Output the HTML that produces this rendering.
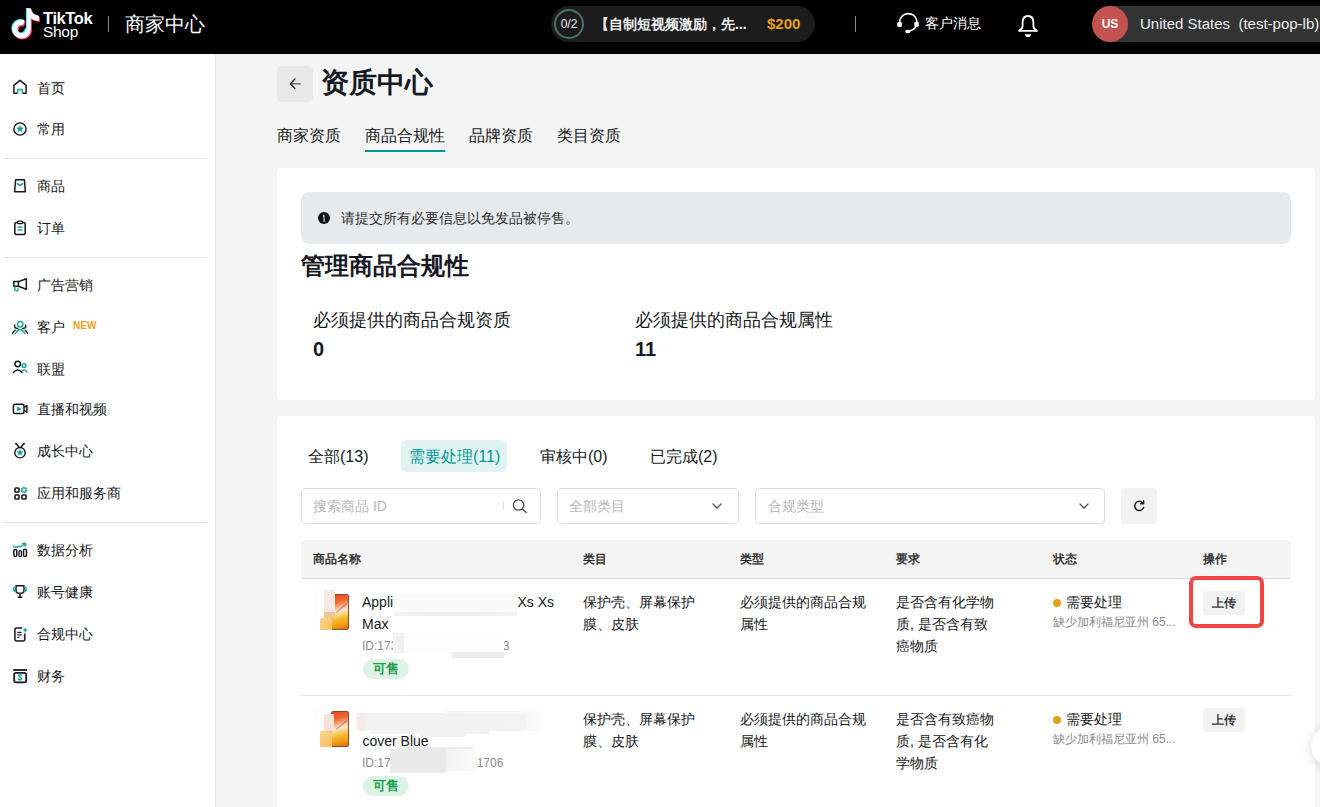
<!DOCTYPE html>
<html><head><meta charset="utf-8">
<style>
*{box-sizing:border-box;margin:0;padding:0}
html,body{width:1320px;height:807px;overflow:hidden;background:#f4f4f4;font-family:"Liberation Sans",sans-serif;color:#161823}
.a{position:absolute;white-space:nowrap}
svg{display:block}
.nav{position:absolute;left:36.5px;font-size:14px;line-height:20px;color:#161823}
.ic{position:absolute;left:12px;width:16px;height:16px}
.dv{position:absolute;left:4px;width:203px;height:1px;background:#e3e3e3}
.th{top:549.5px;font-size:12px;line-height:18px;color:#2a2a2a;-webkit-text-stroke:0.4px currentColor}
.td{font-size:14px;line-height:22px;color:#161823;white-space:nowrap}
.id{font-size:12px;line-height:18px;color:#8a8a8a}
.badge{width:46px;height:20px;border-radius:10px;background:#dcf2e4;color:#1f9e4e;font-size:13px;font-weight:700;line-height:20px;text-align:center}
.sub{font-size:12px;line-height:18px;color:#8a8a8a}
.btn{width:42px;height:24px;border-radius:4px;background:#f1f1f1;font-size:12px;-webkit-text-stroke:0.3px currentColor;line-height:24px;text-align:center;color:#161823}
</style></head><body>
<!-- HEADER -->
<div class="a" style="left:0;top:0;width:1320px;height:54px;background:#000"></div>
<svg class="a" style="left:11px;top:8px" width="34" height="38" viewBox="0 0 34 38">

<g fill="#25f4ee" transform="translate(-0.9,-0.9)"><path d="M15.8 0.5H19.9C20.3 4.3 23.5 7.6 28 8V12.8C25 12.8 22.2 11.9 19.9 10.4V21.3H15.8Z"/><path d="M13.78 12.46A9.3 9.3 0 1 0 19.90 21.2H14.70A4.1 4.1 0 1 1 12.00 17.35Z"/></g>
<g fill="#fe2c55" transform="translate(1.1,1.1)"><path d="M15.8 0.5H19.9C20.3 4.3 23.5 7.6 28 8V12.8C25 12.8 22.2 11.9 19.9 10.4V21.3H15.8Z"/><path d="M13.78 12.46A9.3 9.3 0 1 0 19.90 21.2H14.70A4.1 4.1 0 1 1 12.00 17.35Z"/></g>
<g fill="#fff"><path d="M15.8 0.5H19.9C20.3 4.3 23.5 7.6 28 8V12.8C25 12.8 22.2 11.9 19.9 10.4V21.3H15.8Z"/><path d="M13.78 12.46A9.3 9.3 0 1 0 19.90 21.2H14.70A4.1 4.1 0 1 1 12.00 17.35Z"/></g>
</svg>
<div class="a" style="left:43px;top:9px;font-size:16.5px;line-height:18px;font-weight:700;color:#fff;letter-spacing:-0.4px">TikTok</div>
<div class="a" style="left:43px;top:22px;font-size:15.5px;line-height:20px;color:#fff;letter-spacing:-0.3px">Shop</div>
<div class="a med" style="left:125px;top:10px;font-size:20px;color:#fff;line-height:28px;font-weight:500">商家中心</div>
<div class="a" style="left:108px;top:16px;width:1px;height:16px;background:#8a8a8a"></div>
<div class="a" style="left:551px;top:6px;width:264px;height:36px;background:#1c1c1c;border-radius:18px"></div>
<div class="a" style="left:554px;top:9px;width:30px;height:30px;border:2px solid #4a716a;border-radius:50%"></div>
<div class="a" style="left:554px;top:9px;width:30px;line-height:30px;text-align:center;font-size:12px;color:#eee">0/2</div>
<div class="a" style="left:595px;top:14px;font-size:14px;line-height:20px;font-weight:700;color:#eee">【自制短视频激励，先...</div>
<div class="a" style="left:767px;top:14px;font-size:15px;line-height:20px;font-weight:700;color:#e6a11a">$200</div>
<div class="a" style="left:855px;top:16px;width:1px;height:16px;background:#8a8a8a"></div>
<svg class="a" style="left:892px;top:8px" width="32" height="30" viewBox="0 0 32 30" fill="none" stroke="#fff" stroke-width="1.6" stroke-linecap="round"><path d="M7.6 14.5A8.7 8.7 0 1 1 18.2 22.8"/><rect x="5.2" y="13.8" width="4.7" height="5.2" rx="1.6" fill="#fff" stroke="none"/><rect x="22.3" y="13.8" width="4.6" height="5" rx="1.6" fill="#fff" stroke="none"/><rect x="13.2" y="21.7" width="5.2" height="3.6" rx="1.8" fill="#fff" stroke="none"/></svg>
<div class="a med" style="left:925px;top:13px;font-size:14px;line-height:20px;color:#fff">客户消息</div>
<svg class="a" style="left:1014px;top:12px" width="28" height="28" viewBox="0 0 28 28" fill="none" stroke="#fff" stroke-width="1.8" stroke-linejoin="round"><path d="M14 4C10.3 4 8.6 6.8 8.6 10.5V14C8.6 16.3 7.2 17.8 5 18.9H23C20.8 17.8 19.4 16.3 19.4 14V10.5C19.4 6.8 17.7 4 14 4Z"/><path d="M11 22.2H17Q16.8 25 14 25Q11.2 25 11 22.2Z" fill="#fff" stroke="none"/></svg>
<div class="a" style="left:1110px;top:6px;width:220px;height:36px;background:#333"></div>
<div class="a" style="left:1092px;top:6px;width:36px;height:36px;border-radius:50%;background:#c35250;color:#fff;font-size:12px;font-weight:700;line-height:36px;text-align:center">US</div>
<div class="a med" style="left:1140px;top:14px;font-size:15px;line-height:20px;color:#eee">United States&nbsp;&nbsp;(test-pop-lb)</div>

<!-- SIDEBAR -->
<div class="a" style="left:0;top:54px;width:215px;height:753px;background:#fff"></div>
<div class="a" style="left:215px;top:54px;width:1px;height:753px;background:#e5e5e5"></div>
<div class="dv" style="top:158px"></div>
<div class="dv" style="top:257px"></div>
<div class="dv" style="top:522px"></div>
<div class="nav" style="top:77.5px">首页</div>
<div class="nav" style="top:118.5px">常用</div>
<div class="nav" style="top:175.5px">商品</div>
<div class="nav" style="top:217.5px">订单</div>
<div class="nav" style="top:274.5px">广告营销</div>
<div class="nav" style="top:316.5px">客户</div>
<div class="nav" style="top:358.5px">联盟</div>
<div class="nav" style="top:398.5px">直播和视频</div>
<div class="nav" style="top:440.5px">成长中心</div>
<div class="nav" style="top:482.5px">应用和服务商</div>
<div class="nav" style="top:539.5px">数据分析</div>
<div class="nav" style="top:581.5px">账号健康</div>
<div class="nav" style="top:623.5px">合规中心</div>
<div class="nav" style="top:665.5px">财务</div>

<!-- ICONS -->
<svg class="ic" style="top:79px" viewBox="0 0 16 16" fill="none" stroke-width="1.5" stroke-linejoin="round"><path d="M5.6 14.2H1.9V6.3L8 1.3L14.1 6.3V14.2H10.4" stroke="#161823"/><path d="M5.6 14.5V10.4H10.4V14.5" stroke="#1aa39c"/></svg>
<svg class="ic" style="top:121px" viewBox="0 0 16 16" fill="none"><circle cx="8" cy="8" r="6.1" stroke="#161823" stroke-width="1.4"/><path d="M8.00 4.60 L8.94 6.71 L11.23 6.95 L9.52 8.49 L10.00 10.75 L8.00 9.60 L6.00 10.75 L6.48 8.49 L4.77 6.95 L7.06 6.71Z" fill="#1aa39c" stroke="#1aa39c" stroke-width="0.6" stroke-linejoin="round"/></svg>
<svg class="ic" style="top:178px" viewBox="0 0 16 16" fill="none" stroke-width="1.5" stroke-linejoin="round"><path d="M3.6 1.8H12.4L13.4 13.8H2.6Z" stroke="#161823"/><path d="M5.4 5.6Q8 8.6 10.6 5.6" stroke="#1aa39c" stroke-width="1.7" stroke-linecap="round"/></svg>
<svg class="ic" style="top:220px" viewBox="0 0 16 16" fill="none" stroke-width="1.5"><rect x="2.8" y="2.6" width="10.4" height="12" rx="1.8" stroke="#161823"/><rect x="5.6" y="1.2" width="4.8" height="2.4" rx="1.2" fill="#fff" stroke="#161823" stroke-width="1.3"/><path d="M5.6 7.3H10.4M5.6 10H10.4" stroke="#1aa39c" stroke-width="1.5"/></svg>
<svg class="ic" style="top:277px" viewBox="0 0 16 16" fill="none" stroke-width="1.5" stroke-linejoin="round"><rect x="1.8" y="4.6" width="4.6" height="4.6" stroke="#161823"/><path d="M6.4 4.6L14.3 1.8V12.2L6.4 9.2" stroke="#161823"/><path d="M2.9 9.6V12.3Q2.9 13.9 4.5 13.9Q6 13.9 6 12.4V11.2" stroke="#1aa39c"/></svg>
<svg class="ic" style="top:319px" viewBox="0 0 16 16" fill="none" stroke-width="1.35" stroke-linecap="round"><circle cx="8.2" cy="5.2" r="2.75" stroke="#1aa39c"/><path d="M3.4 14.5Q8.1 6.6 12.9 14.5" stroke="#1aa39c" stroke-width="1.45"/><path d="M2.9 6.2Q1.4 9.2 5.8 9.5M13.5 6.2Q15 9.2 10.6 9.5M0.6 14.5Q1.4 12.2 3.1 11.2M15.6 14.5Q14.8 12.2 13.2 11.2" stroke="#161823"/></svg>
<svg class="ic" style="top:359px" viewBox="0 0 16 16" fill="none" stroke-width="1.5" stroke-linecap="round"><circle cx="5.7" cy="5" r="2.7" stroke="#161823"/><path d="M1.3 13.6Q5.7 8.2 10 13.6" stroke="#161823"/><circle cx="12" cy="6.6" r="1.9" stroke="#1aa39c"/><path d="M10.6 11.6Q13.2 9.8 14.9 13.2" stroke="#1aa39c"/></svg>
<svg class="ic" style="top:401px" viewBox="0 0 16 16" fill="none" stroke-width="1.5" stroke-linejoin="round"><rect x="1.4" y="3.3" width="10.6" height="9.2" rx="1.6" stroke="#161823"/><path d="M12 6.4L14.9 4.6V11.2L12 9.4" stroke="#161823"/><path d="M5.3 5.9L9 7.9L5.3 9.9Z" fill="#1aa39c" stroke="#1aa39c" stroke-width="0.8"/></svg>
<svg class="ic" style="top:443px" viewBox="0 0 16 16" fill="none" stroke-width="1.4" stroke-linecap="round"><circle cx="8" cy="9.7" r="5.2" stroke="#161823"/><path d="M3.6 0.8L4.4 0.8L7 4.3M12.4 0.8L11.6 0.8L9 4.3" stroke="#161823" stroke-width="1.5"/><path d="M8.00 6.40 L8.88 8.39 L11.04 8.61 L9.43 10.06 L9.88 12.19 L8.00 11.10 L6.12 12.19 L6.57 10.06 L4.96 8.61 L7.12 8.39Z" fill="#1aa39c" stroke="#1aa39c" stroke-width="0.5" stroke-linejoin="round"/></svg>
<svg class="ic" style="top:485px" viewBox="0 0 16 16" fill="none" stroke-width="1.6"><rect x="3" y="3" width="4" height="4" rx="0.8" stroke="#161823"/><rect x="10" y="3" width="4" height="4" rx="0.8" stroke="#1aa39c"/><rect x="3" y="10" width="4" height="4" rx="0.8" stroke="#161823"/><rect x="10" y="10" width="4" height="4" rx="0.8" stroke="#161823"/></svg>
<svg class="ic" style="top:542px" viewBox="0 0 16 16" fill="none" stroke-width="1.5"><rect x="1.9" y="7.4" width="2.9" height="7" rx="1.4" stroke="#161823"/><rect x="7" y="8.6" width="2.4" height="5.8" rx="1.2" stroke="#161823" stroke-width="1.3"/><rect x="11.5" y="7.2" width="3" height="7.2" rx="1.5" stroke="#161823"/><path d="M1.6 4.5Q7 6.4 12.6 2.4" stroke="#1aa39c" stroke-linecap="round"/><path d="M10.6 1.6L13.8 1.6L13.2 4.4" stroke="#1aa39c" stroke-linecap="round" stroke-linejoin="round"/></svg>
<svg class="ic" style="top:583px" viewBox="0 0 16 16" fill="none" stroke-width="1.5"><path d="M4 2.8H12V6.8Q12 10.6 8 10.6Q4 10.6 4 6.8Z" stroke="#161823" stroke-linejoin="round"/><path d="M8 10.6V14M5.6 14.2H10.4" stroke="#161823"/><path d="M4 4Q1.6 3.8 1.8 6.2Q2.1 8.6 4.4 8.8M12 4Q14.4 3.8 14.2 6.2Q13.9 8.6 11.6 8.8" stroke="#1aa39c"/></svg>
<svg class="ic" style="top:626px" viewBox="0 0 16 16" fill="none" stroke-width="1.5"><path d="M9.6 1.9H4.3Q2.9 1.9 2.9 3.3V13.6Q2.9 15 4.3 15H11.4Q12.8 15 12.8 13.6V8" stroke="#161823" stroke-linecap="round"/><path d="M5.4 6.4H9.6M5.4 8.9H9.6M5.4 11.4H7.4" stroke="#161823" stroke-width="1.3"/><path d="M13.2 1Q13.5 3.8 15.8 4.1Q13.5 4.4 13.2 7.2Q12.9 4.4 10.6 4.1Q12.9 3.8 13.2 1Z" fill="#1aa39c"/></svg>
<svg class="ic" style="top:668px" viewBox="0 0 16 16" fill="none"><rect x="1.2" y="1.1" width="13.8" height="1.8" fill="#161823"/><rect x="2.2" y="4.8" width="12" height="9.6" rx="1.8" stroke="#161823" stroke-width="1.8"/><path d="M9.6 7.2Q8.8 6.6 8 6.6Q6.6 6.6 6.6 7.7Q6.6 8.6 8.1 9.1Q9.6 9.6 9.6 10.6Q9.6 11.8 8.1 11.8Q7.1 11.8 6.4 11.2M8.1 5.6V6.6M8.1 11.8V12.8" stroke="#1aa39c" stroke-width="1.4" stroke-linecap="round"/></svg>
<div class="a" style="left:73px;top:319px;font-size:10px;line-height:14px;font-weight:700;color:#e6a11a">NEW</div>

<!-- MAIN TOP -->
<div class="a" style="left:277px;top:66px;width:36px;height:36px;background:#e8e8e8;border-radius:5px"></div>
<svg class="a" style="left:283px;top:72px" width="24" height="24" viewBox="0 0 24 24" fill="none" stroke-linecap="round" stroke-linejoin="round"><path d="M11.9 7.1L7.4 11.9L11.9 16.5" stroke="#222" stroke-width="1.4"/><path d="M8 11.9H17.3" stroke="#555" stroke-width="1.3"/></svg>
<div class="a" style="left:321px;top:63px;font-size:28px;line-height:40px;font-weight:700">资质中心</div>
<div class="a med" style="left:277px;top:125px;font-size:16px;line-height:22px">商家资质</div>
<div class="a med" style="left:365px;top:125px;font-size:16px;line-height:22px">商品合规性</div>
<div class="a med" style="left:469px;top:125px;font-size:16px;line-height:22px">品牌资质</div>
<div class="a med" style="left:557px;top:125px;font-size:16px;line-height:22px">类目资质</div>
<div class="a" style="left:365px;top:150px;width:80px;height:2px;background:#009995"></div>

<!-- CARD 1 -->

<div class="a" style="left:277px;top:168px;width:1038px;height:232px;background:#fff;border-radius:4px"></div>
<div class="a" style="left:301px;top:192px;width:990px;height:52px;background:#e7eaed;border-radius:8px"></div>
<svg class="a" style="left:318px;top:212px" width="12" height="12" viewBox="0 0 12 12"><circle cx="6" cy="6" r="6" fill="#111"/><path d="M5.1 3.2H6.5V9H7.3V9.6H4.9V9H5.6V4.8H5.1Z" fill="#fff"/></svg>
<div class="a" style="left:341px;top:208px;font-size:14px;line-height:20px;color:#2b2b2b">请提交所有必要信息以免发品被停售。</div>
<div class="a" style="left:301px;top:250px;font-size:24px;line-height:32px;font-weight:700">管理商品合规性</div>
<div class="a med" style="left:313px;top:308px;font-size:18px;line-height:24px;font-weight:500">必须提供的商品合规资质</div>
<div class="a" style="left:313px;top:336px;font-size:20px;line-height:26px;font-weight:700">0</div>
<div class="a med" style="left:635px;top:308px;font-size:18px;line-height:24px;font-weight:500">必须提供的商品合规属性</div>
<div class="a" style="left:635px;top:336px;font-size:20px;line-height:26px;font-weight:700">11</div>

<!-- CARD 2 -->
<div class="a" style="left:277px;top:416px;width:1038px;height:420px;background:#fff;border-radius:4px"></div>
<div class="a med" style="left:308px;top:446px;font-size:16px;line-height:22px;color:#161823">全部(13)</div>
<div class="a" style="left:401px;top:440px;width:106px;height:32px;background:#e0f2f1;border-radius:6px"></div>
<div class="a med" style="left:409px;top:446px;font-size:16px;line-height:22px;color:#009a95">需要处理(11)</div>
<div class="a med" style="left:540px;top:446px;font-size:16px;line-height:22px;color:#161823">审核中(0)</div>
<div class="a med" style="left:650px;top:446px;font-size:16px;line-height:22px;color:#161823">已完成(2)</div>

<div class="a" style="left:301px;top:488px;width:240px;height:36px;border:1px solid #dcdcdc;border-radius:4px;background:#fff"></div>
<div class="a" style="left:313px;top:496px;font-size:14px;line-height:20px;color:#b8b8b8">搜索商品 ID</div>
<div class="a" style="left:503px;top:503px;width:1px;height:6px;background:#d8d8d8"></div>
<svg class="a" style="left:511px;top:497px" width="18" height="18" viewBox="0 0 18 18" fill="none" stroke="#4a4a4a" stroke-width="1.3" stroke-linecap="round"><circle cx="7.6" cy="8" r="5.2"/><path d="M11.5 12L15.2 15.5"/></svg>
<div class="a" style="left:557px;top:488px;width:182px;height:36px;border:1px solid #dcdcdc;border-radius:4px;background:#fff"></div>
<div class="a" style="left:569px;top:496px;font-size:14px;line-height:20px;color:#b8b8b8">全部类目</div>
<svg class="a" style="left:711px;top:500px" width="12" height="12" viewBox="0 0 12 12" fill="none" stroke="#555" stroke-width="1.3" stroke-linecap="round" stroke-linejoin="round"><path d="M2 4L6 8L10 4"/></svg>
<div class="a" style="left:755px;top:488px;width:350px;height:36px;border:1px solid #dcdcdc;border-radius:4px;background:#fff"></div>
<div class="a" style="left:768px;top:496px;font-size:14px;line-height:20px;color:#b8b8b8">合规类型</div>
<svg class="a" style="left:1078px;top:500px" width="12" height="12" viewBox="0 0 12 12" fill="none" stroke="#555" stroke-width="1.3" stroke-linecap="round" stroke-linejoin="round"><path d="M2 4L6 8L10 4"/></svg>
<div class="a" style="left:1121px;top:488px;width:36px;height:36px;background:#f1f1f1;border-radius:4px"></div>
<svg class="a" style="left:1132px;top:499px" width="14" height="14" viewBox="0 0 14 14" fill="none" stroke="#161823" stroke-width="1.45" stroke-linecap="round"><path d="M11 4.2A4.6 4.6 0 1 0 11.6 8.6"/><path d="M11.6 1.8V4.8H8.6" stroke-linejoin="round"/></svg>

<div class="a" style="left:301px;top:540px;width:990px;height:38px;background:#f4f4f4;border-radius:4px 4px 0 0"></div>
<div class="a" style="left:301px;top:578px;width:990px;height:1px;background:#dcdcdc"></div>
<div class="a th" style="left:313px">商品名称</div>
<div class="a th" style="left:583px">类目</div>
<div class="a th" style="left:740px">类型</div>
<div class="a th" style="left:896px">要求</div>
<div class="a th" style="left:1053px">状态</div>
<div class="a th" style="left:1203px">操作</div>

<!-- ROW 1 -->
<div class="a" style="left:301px;top:695px;width:990px;height:1px;background:#e6e6e6"></div>
<div class="a td" style="left:362px;top:590.5px">Appli<br>Max</div>
<div class="a td" style="left:517.5px;top:590.5px">Xs Xs</div>
<div class="a id" style="left:362px;top:637px">ID:173</div>
<div class="a id" style="left:496px;top:637px">73</div>
<div class="a badge" style="left:363px;top:659px">可售</div>
<div class="a td" style="left:583px;top:591px">保护壳、屏幕保护<br>膜、皮肤</div>
<div class="a td" style="left:740px;top:591px">必须提供的商品合规<br>属性</div>
<div class="a td" style="left:896px;top:591px">是否含有化学物<br>质, 是否含有致<br>癌物质</div>
<div class="a" style="left:1053px;top:599px;width:8px;height:8px;border-radius:50%;background:#e6a11a"></div>
<div class="a td med" style="left:1066px;top:591px">需要处理</div>
<div class="a sub" style="left:1053px;top:612.5px">缺少加利福尼亚州 65...</div>
<div class="a btn" style="left:1203px;top:591px">上传</div>
<div class="a" style="left:1189px;top:576px;width:75px;height:51.5px;border:4px solid #f24545;border-radius:7px"></div>

<!-- ROW 2 -->
<div class="a td" style="left:362.5px;top:707.5px"><br>cover Blue</div>
<div class="a id" style="left:362px;top:754px">ID:17</div>
<div class="a id" style="left:470px;top:754px">61706</div>
<div class="a badge" style="left:363px;top:776px">可售</div>
<div class="a td" style="left:583px;top:708px">保护壳、屏幕保护<br>膜、皮肤</div>
<div class="a td" style="left:740px;top:708px">必须提供的商品合规<br>属性</div>
<div class="a td" style="left:896px;top:708px">是否含有致癌物<br>质, 是否含有化<br>学物质</div>
<div class="a" style="left:1053px;top:716px;width:8px;height:8px;border-radius:50%;background:#e6a11a"></div>
<div class="a td med" style="left:1066px;top:708px">需要处理</div>
<div class="a sub" style="left:1053px;top:729.5px">缺少加利福尼亚州 65...</div>
<div class="a btn" style="left:1203px;top:708px">上传</div>
<!-- IMAGES -->
<div class="a" style="left:331px;top:593.5px;width:17.5px;height:36.5px;border-radius:2px;border:0.6px solid #7a5038;background:linear-gradient(165deg,#ee4517 0%,#f36a32 22%,#f9b796 38%,#fde9d9 47%,#fbd77a 56%,#f6b42a 70%,#f09a12 85%,#e2690a 100%)"></div>
<div class="a" style="left:341px;top:601px;width:0.8px;height:14px;background:rgba(90,30,20,.4);transform:rotate(50deg)"></div>
<div class="a" style="left:314px;top:590px;width:10px;height:28px;background:#fdfdfd"></div>
<div class="a" style="left:324px;top:590px;width:11px;height:22px;background:#f6e8e2"></div>
<div class="a" style="left:324px;top:612px;width:11px;height:6px;background:#ecc896"></div>
<div class="a" style="left:319.5px;top:618px;width:12.5px;height:12px;background:linear-gradient(135deg,#fbd690,#f9bf5e);border-radius:1px"></div>
<div class="a" style="left:331px;top:710.8px;width:17.5px;height:36.2px;border-radius:2px;border:0.6px solid #7a5038;background:linear-gradient(165deg,#ee4517 0%,#f36a32 22%,#f9b796 38%,#fde9d9 47%,#fbd77a 56%,#f6b42a 70%,#f09a12 85%,#e2690a 100%)"></div>
<div class="a" style="left:341px;top:718px;width:0.8px;height:14px;background:rgba(90,30,20,.4);transform:rotate(50deg)"></div>
<div class="a" style="left:314px;top:709px;width:10px;height:22px;background:#fdfdfd"></div>
<div class="a" style="left:324px;top:714px;width:10px;height:17px;background:#f6e2da"></div>
<div class="a" style="left:319.5px;top:731px;width:12.5px;height:16px;background:linear-gradient(135deg,#fbd690,#f9bf5e);border-radius:1px"></div>
<!-- MASKS -->
<div class="a" style="left:394px;top:594px;width:123px;height:18px;background:#fafafa"></div>
<div class="a" style="left:394px;top:612px;width:123px;height:4px;background:linear-gradient(90deg,#f2f2f2,#ececec 60%,#f6f6f6)"></div>
<div class="a" style="left:393px;top:633px;width:111px;height:20px;background:#fdfdfd"></div>
<div class="a" style="left:393px;top:633px;width:11px;height:20px;background:#f1f1f1"></div>
<div class="a" style="left:452px;top:652px;width:52px;height:6px;background:#ededed"></div>
<div class="a" style="left:357px;top:713px;width:183px;height:18px;background:linear-gradient(90deg,#f7ebea 0%,#f7ebea 4%,#f2f2f2 5%,#f1f1f1 50%,#f3f3f3 92%,#f8f8f8 93%,#fafafa 100%)"></div>
<div class="a" style="left:445px;top:710.5px;width:95px;height:3px;background:linear-gradient(90deg,#f5f5f5,#f8f8f8)"></div>
<div class="a" style="left:370px;top:731px;width:120px;height:3px;background:#f1f1f1"></div>
<div class="a" style="left:420px;top:734px;width:45px;height:3px;background:#f3f3f3"></div>
<div class="a" style="left:390px;top:749px;width:86px;height:22px;background:linear-gradient(90deg,#e9e9e9 0%,#e9e9e9 65%,#f3f3f3 66%,#f7f7f7 85%,#fafafa 100%)"></div>
<div class="a" style="left:397px;top:746.5px;width:76px;height:2.5px;background:#ececec"></div>
<div class="a" style="left:390px;top:771px;width:55px;height:2px;background:#ebebeb"></div>
<div class="a" style="left:1311px;top:726px;width:40px;height:40px;border-radius:50%;background:#fff;box-shadow:0 2px 12px rgba(0,0,0,0.15)"></div>
</body></html>
